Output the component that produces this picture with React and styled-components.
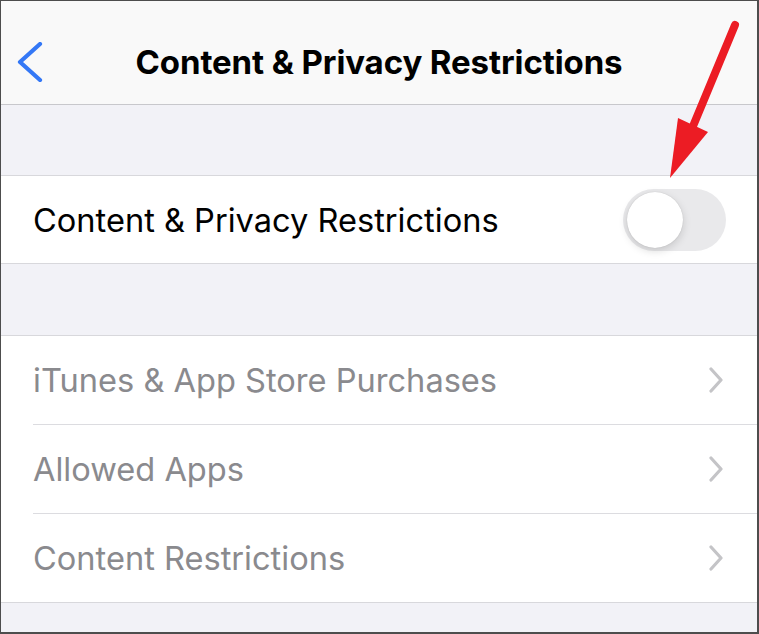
import React from "react";
import styled, { createGlobalStyle } from "styled-components";

const GlobalStyle = createGlobalStyle`
  html, body {
    margin: 0;
    padding: 0;
    background: #fff;
  }
  body {
    font-family: Inter, "Noto Sans", sans-serif;
    -webkit-font-smoothing: antialiased;
  }
`;

const Frame = styled.div`
  position: relative;
  width: 759px;
  height: 634px;
  box-sizing: border-box;
  border: solid #4d4d4d;
  border-width: 1px 2px 2px 1px;
  background: #f2f2f7;
  overflow: hidden;
  display: flex;
  flex-direction: column;
`;

const NavBar = styled.header`
  height: 104px;
  box-sizing: border-box;
  padding-top: 19px;
  flex-shrink: 0;
  background: #f9f9f9;
  border-bottom: 1px solid #c8c8cc;
  display: grid;
  grid-template-columns: 110px 1fr 110px;
  align-items: center;
`;

const BackButton = styled.button`
  border: 0;
  background: none;
  padding: 0 0 0 15px;
  height: 40px;
  display: flex;
  align-items: center;
  cursor: pointer;
`;

const Title = styled.h1`
  margin: 0;
  text-align: center;
  font-size: 33px;
  font-weight: 700;
  color: #000;
  letter-spacing: -0.1px;
  white-space: nowrap;
`;

const Spacer = styled.div`
  height: ${p => p.h}px;
  flex-shrink: 0;
`;

const Group = styled.section`
  background: #fff;
  border-top: 1px solid #d8d8dc;
  border-bottom: 1px solid #d8d8dc;
`;

const Row = styled.div`
  height: ${p => p.h || 88}px;
  display: flex;
  align-items: center;
  margin-left: 32px;
  padding-right: 31px;
  & + & {
    border-top: 1px solid #dcdce0;
  }
`;

const Label = styled.span`
  flex: 1;
  font-size: 32.6px;
  color: ${p => (p.muted ? "#8a8a8e" : "#000")};
  white-space: nowrap;
`;

const Toggle = styled.div`
  position: relative;
  width: 103px;
  height: 62px;
  border-radius: 31px;
  background: #e9e9eb;
  flex-shrink: 0;
`;

const Knob = styled.div`
  position: absolute;
  top: 3px;
  left: 4px;
  width: 56px;
  height: 56px;
  border-radius: 50%;
  background: #fff;
  box-shadow: 0 3px 8px rgba(0, 0, 0, 0.15), 0 0 1px rgba(0, 0, 0, 0.2);
`;

const Chevron = styled.svg`
  flex-shrink: 0;
  margin-right: 2px;
`;

const ArrowLayer = styled.svg`
  position: absolute;
  left: 0;
  top: 0;
  pointer-events: none;
`;

const rows = [
  "iTunes & App Store Purchases",
  "Allowed Apps",
  "Content Restrictions",
];

export default function App() {
  return (
    <>
      <GlobalStyle />
      <Frame>
        <NavBar>
          <BackButton aria-label="Back">
            <svg width="28" height="40" viewBox="0 0 28 40">
              <path
                d="M24 2 L4 20 L24 38"
                fill="none"
                stroke="#3478f6"
                strokeWidth="4.2"
                strokeLinecap="round"
                strokeLinejoin="round"
              />
            </svg>
          </BackButton>
          <Title>Content &amp; Privacy Restrictions</Title>
          <div />
        </NavBar>

        <Spacer h={70} />

        <Group>
          <Row h={87}>
            <Label>Content &amp; Privacy Restrictions</Label>
            <Toggle>
              <Knob />
            </Toggle>
          </Row>
        </Group>

        <Spacer h={71} />

        <Group>
          {rows.map(text => (
            <Row key={text}>
              <Label muted>{text}</Label>
              <Chevron width="16" height="26" viewBox="0 0 16 26">
                <path
                  d="M3 2 L13 13 L3 24"
                  fill="none"
                  stroke="#c4c4c7"
                  strokeWidth="3.2"
                  strokeLinecap="round"
                  strokeLinejoin="round"
                />
              </Chevron>
            </Row>
          ))}
        </Group>

        <ArrowLayer width="759" height="634" viewBox="0 0 759 634">
          <line
            x1="734"
            y1="24"
            x2="690"
            y2="130"
            stroke="#ec1c24"
            strokeWidth="8"
            strokeLinecap="round"
          />
          <polygon points="669,177 677,117 707,131" fill="#ec1c24" />
        </ArrowLayer>
      </Frame>
    </>
  );
}
